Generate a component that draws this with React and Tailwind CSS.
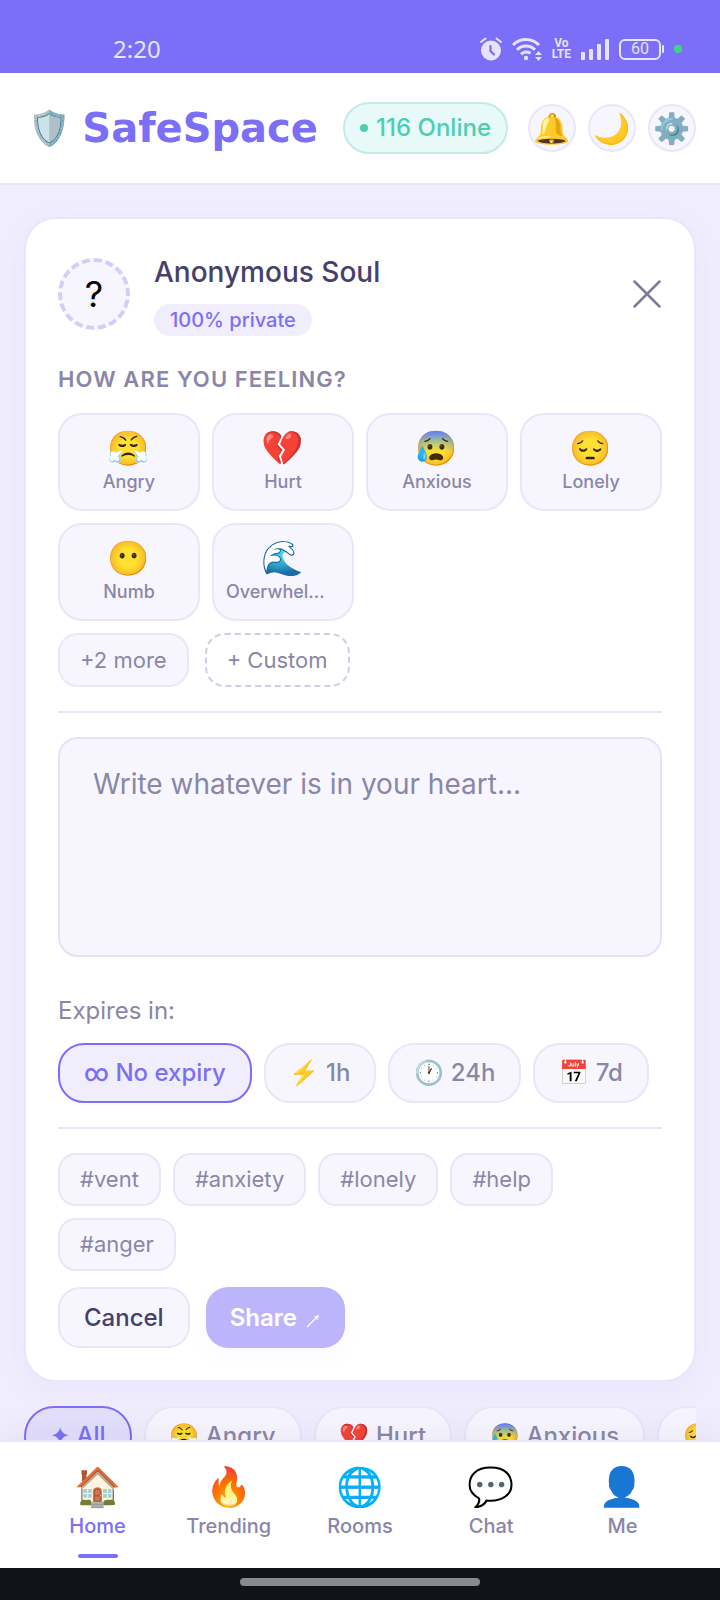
import { useState } from "react";
import { X } from "lucide-react";

const moods = [
    { emoji: "😤", name: "Angry" },
    { emoji: "💔", name: "Hurt" },
    { emoji: "😰", name: "Anxious" },
    { emoji: "😔", name: "Lonely" },
    { emoji: "😶", name: "Numb" },
    { emoji: "🌊", name: "Overwhelmed" },
];

const expiryOptions = [
    { icon: "∞", label: "No expiry" },
    { icon: "⚡", label: "1h" },
    { icon: "🕐", label: "24h" },
    { icon: "📅", label: "7d" },
];

const tags = ["#vent", "#anxiety", "#lonely", "#help", "#anger"];

const filters = [
    { icon: "✦", label: "All" },
    { icon: "😤", label: "Angry" },
    { icon: "💔", label: "Hurt" },
    { icon: "😰", label: "Anxious" },
    { icon: "😔", label: "Lonely" },
];

const navItems = [
    { icon: "🏠", label: "Home" },
    { icon: "🔥", label: "Trending" },
    { icon: "🌐", label: "Rooms" },
    { icon: "💬", label: "Chat" },
    { icon: "👤", label: "Me" },
];

const StatusBar = () => (
    <div className="flex h-[73px] shrink-0 items-end justify-between bg-[#7c6ff7] pr-[38px] pb-3 pl-[113px] text-[#e6e2ff]">
        <span className="font-['Noto_Sans',sans-serif] text-2xl leading-6">2:20</span>
        <div className="flex items-center gap-2.5">
            <svg width="22" height="24" viewBox="0 0 22 24" fill="none">
                <circle cx="11" cy="13.5" r="10" fill="#e6e2ff" />
                <path d="M1 5l4.500-3.500M21 5l-4.500-3.500" stroke="#e6e2ff" strokeWidth="2" strokeLinecap="round" />
                <path d="M10.500 9v5l3.500 3.500" stroke="#7c6ff7" strokeWidth="2.200" strokeLinecap="round" />
            </svg>
            <svg width="30" height="24" viewBox="0 0 30 24" fill="none" stroke="#e6e2ff" strokeWidth="3">
                <path d="M1 8a18 18 0 0 1 26 0" />
                <path d="M5 12.800a12.500 12.500 0 0 1 18 0" />
                <path d="M9 17.300a7 7 0 0 1 9.500-1" />
                <circle cx="14" cy="21" r="2.200" fill="#e6e2ff" stroke="none" />
                <path d="M23 18l3.500-4 3.500 4zM23 20l3.500 4 3.500-4z" fill="#e6e2ff" stroke="none" />
            </svg>
            <span className="flex flex-col items-center font-['Liberation_Sans_Narrow','Roboto',sans-serif] text-xs leading-[11px] font-bold">
                <span>Vo</span>
                <span>LTE</span>
            </span>
            <svg width="28" height="22" viewBox="0 0 28 22" fill="#e6e2ff">
                <rect x="0" y="14" width="4" height="8" rx="1" />
                <rect x="8" y="11" width="4" height="11" rx="1" />
                <rect x="16" y="6" width="4" height="16" rx="1" />
                <rect x="24" y="1" width="4" height="21" rx="1" />
            </svg>
            <span className="flex items-center gap-px">
                <span className="flex h-[21px] w-[42px] items-center justify-center rounded-md border-2 border-[#e6e2ff] font-['Roboto',sans-serif] text-base leading-none">
                    60
                </span>
                <span className="h-2 w-0.5 rounded-sm bg-[#e6e2ff]" />
            </span>
            <span className="size-2 rounded-full bg-[#3fd67f]" />
        </div>
    </div>
);

const Header = () => (
    <header className="flex h-28 shrink-0 items-center justify-between border-b-2 border-[#e9e6f5] bg-white px-6">
        <div className="flex items-center gap-3 pl-1">
            <span className="text-[34px] leading-none">🛡️</span>
            <h1 className="font-['DejaVu_Sans',sans-serif] text-[40px] leading-none font-bold text-[#7c6ff7]">SafeSpace</h1>
        </div>
        <div className="flex items-center gap-5">
            <div className="flex h-[52px] items-center gap-2 rounded-full border-2 border-[#c0ece4] bg-[#e8faf7] px-[15px] text-2xl font-medium whitespace-nowrap text-[#4ecdb4]">
                <span className="size-2 rounded-full bg-[#4ecdb4]" />
                116 Online
            </div>
            <div className="flex gap-3">
                {["🔔", "🌙", "⚙️"].map((icon) => (
                    <button
                        key={icon}
                        className="flex size-12 items-center justify-center rounded-full border-2 border-[#e9e6f9] bg-[#f7f6fe] text-[30px] leading-none"
                    >
                        {icon}
                    </button>
                ))}
            </div>
        </div>
    </header>
);

const ComposeCard = () => {
    const [text, setText] = useState("");
    const [expiry, setExpiry] = useState("No expiry");

    return (
        <section className="rounded-[32px] border-2 border-[#e9e6f9] bg-white p-8 pt-6 shadow-[0_8px_32px_rgba(124,111,247,0.06)]">
            <div className="flex items-center justify-between">
                <div className="flex items-center gap-6">
                    <div className="flex size-[72px] items-center justify-center rounded-full border-4 border-dashed border-[#d4cdfa] bg-[#f7f6fe] text-4xl text-black">
                        ?
                    </div>
                    <div className="flex h-[102px] flex-col items-start justify-center gap-3">
                        <h2 className="text-[28px] leading-10 font-medium text-[#45416a]">Anonymous Soul</h2>
                        <span className="rounded-full bg-[#f0eefc] px-4 text-xl leading-8 font-medium text-[#7c6ff7]">100% private</span>
                    </div>
                </div>
                <button aria-label="Close" className="-mr-2.5 text-[#7f7a9c]">
                    <X size={50} strokeWidth={1.2} />
                </button>
            </div>

            <h3 className="mt-5 text-[22px] leading-7 font-semibold tracking-wider text-[#8a86a8]">HOW ARE YOU FEELING?</h3>

            <div className="mt-5 grid grid-cols-4 gap-3">
                {moods.map((mood) => (
                    <button
                        key={mood.name}
                        className="flex h-[98px] min-w-0 flex-col items-center justify-center rounded-3xl border-2 border-[#e9e6f9] bg-[#f7f6fe] px-3"
                    >
                        <span className="mb-1 text-[34px] leading-9">{mood.emoji}</span>
                        <span className="max-w-full truncate text-lg leading-6 font-medium text-[#8a86a8]">{mood.name}</span>
                    </button>
                ))}
            </div>

            <div className="mt-3 flex gap-4">
                <button className="h-[54px] rounded-[20px] border-2 border-[#e9e6f9] bg-[#f7f6fe] px-5 text-[22px] text-[#8a86a8]">+2 more</button>
                <button className="h-[54px] rounded-[20px] border-2 border-dashed border-[#d0cce6] px-5 text-[22px] text-[#8a86a8]">+ Custom</button>
            </div>

            <hr className="mt-6 border-t-2 border-[#e9e6f5]" />

            <textarea
                aria-label="Your message"
                value={text}
                onChange={(e) => setText(e.target.value)}
                placeholder="Write whatever is in your heart..."
                className="mt-6 block h-[220px] w-full resize-none rounded-[20px] border-2 border-[#e5e1f8] bg-[#f7f6fe] px-[33px] py-[25px] text-[28px] leading-10 text-[#3d3a5c] outline-none placeholder:text-[#8a86a8]"
            />

            <p className="mt-[38px] text-2xl leading-8 text-[#8a86a8]">Expires in:</p>
            <div className="mt-4 flex flex-wrap gap-3">
                {expiryOptions.map((option) => (
                    <button
                        key={option.label}
                        onClick={() => setExpiry(option.label)}
                        className={`h-[60px] rounded-[26px] border-2 px-6 text-2xl font-medium ${
                            expiry === option.label
                                ? "border-[#7c6ff7] bg-[#f0eefc] text-[#7c6ff7]"
                                : "border-[#e9e6f9] bg-[#f7f6fe] text-[#8a86a8]"
                        }`}
                    >
                        <span className="font-['Roboto','Noto_Color_Emoji',sans-serif]">{option.icon}</span> {option.label}
                    </button>
                ))}
            </div>

            <hr className="mt-6 border-t-2 border-[#e9e6f5]" />

            <div className="mt-6 flex flex-wrap gap-3">
                {tags.map((tag) => (
                    <button key={tag} className="h-[53px] rounded-[18px] border-2 border-[#e9e6f9] bg-[#f7f6fe] px-5 text-[22px] text-[#8a86a8]">
                        {tag}
                    </button>
                ))}
            </div>

            <div className="mt-4 flex gap-4">
                <button className="h-[61px] rounded-[22px] border-2 border-[#e9e6f9] bg-[#f7f6fe] px-6 text-2xl font-medium text-[#45416a]">Cancel</button>
                <button className="flex h-[61px] items-center gap-2 rounded-[22px] bg-[#bdb5fb] px-6 text-2xl font-semibold text-white shadow-[0_8px_20px_rgba(124,111,247,0.04)]">
                    Share
                    <svg width="16" height="16" viewBox="0 0 16 16" className="mt-1" fill="none" stroke="#fff">
                        <path d="M2 15L12 5" strokeWidth="1.200" />
                        <path d="M14 3l-1.500 5-3.500-3.500z" fill="#fff" stroke="none" />
                    </svg>
                </button>
            </div>
        </section>
    );
};

const FilterBar = () => (
    <div className="mt-6 flex gap-3 overflow-hidden">
        {filters.map((filter, index) => (
            <button
                key={filter.label}
                className={`h-[60px] shrink-0 rounded-[30px] border-2 px-6 text-2xl font-medium ${
                    index === 0 ? "border-[#7c6ff7] bg-[#e3dffb] text-[#7c6ff7]" : "border-[#e9e6f9] bg-[#f7f6fe] text-[#8a86a8]"
                }`}
            >
                {filter.icon} {filter.label}
            </button>
        ))}
    </div>
);

const BottomNav = () => (
    <nav className="z-10 grid h-32 shrink-0 grid-cols-5 border-t-2 border-[#e9e6f9] bg-white px-8 shadow-[0_-8px_32px_rgba(60,50,120,0.06)]">
        {navItems.map((item, index) => (
            <a key={item.label} href="#" className={`flex flex-col items-center pt-5 ${index === 0 ? "text-[#7c6ff7]" : "text-[#8a86a8]"}`}>
                <span className="mb-1 text-[38px] leading-[48px]">{item.icon}</span>
                <span className="text-xl leading-6 font-medium">{item.label}</span>
                {index === 0 && <span className="mt-4 h-1 w-10 rounded-full bg-[#7c6ff7]" />}
            </a>
        ))}
    </nav>
);

const App = () => {
    return (
        <div className="flex h-screen flex-col overflow-hidden bg-[#f0edfe] font-['Inter','Noto_Color_Emoji',sans-serif]">
            <StatusBar />
            <Header />
            <main className="min-h-0 flex-1 overflow-hidden px-6 pt-8">
                <ComposeCard />
                <FilterBar />
            </main>
            <BottomNav />
            <div className="flex h-8 shrink-0 justify-center bg-[#121318] pt-2.5">
                <span className="h-2 w-1/3 rounded-full bg-[#8a8b8e]" />
            </div>
        </div>
    );
};

export default App;
